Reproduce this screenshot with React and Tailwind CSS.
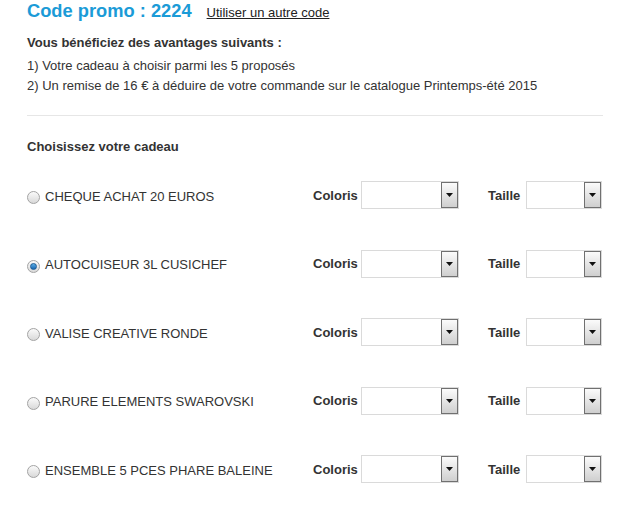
import { useState } from 'react';

const GIFTS = [
  'CHEQUE ACHAT 20 EUROS',
  'AUTOCUISEUR 3L CUSICHEF',
  'VALISE CREATIVE RONDE',
  'PARURE ELEMENTS SWAROVSKI',
  'ENSEMBLE 5 PCES PHARE BALEINE',
];

function Radio({ checked, onClick }) {
  return (
    <span
      onClick={onClick}
      className="relative flex h-[13px] w-[13px] shrink-0 cursor-pointer items-center justify-center rounded-full border border-[#a3a3a3] bg-gradient-to-b from-[#fafafa] to-[#d9d9d9]"
    >
      {checked && (
        <span className="h-[7px] w-[7px] rounded-full border border-[#1c5b95] bg-gradient-to-b from-[#5aaee6] to-[#1766b0]" />
      )}
    </span>
  );
}

function FakeSelect({ width }) {
  return (
    <div className={`flex h-[28px] border border-[#dadada] bg-white ${width}`}>
      <div className="flex-1" />
      <div className="flex h-full w-[17px] items-center justify-center border border-[#707070] bg-gradient-to-b from-[#fbfbfb] to-[#cfcfcf]">
        <svg width="7" height="4" viewBox="0 0 7 4">
          <path d="M0 0h7L3.5 4z" fill="#111" />
        </svg>
      </div>
    </div>
  );
}

export default function App() {
  const [gift, setGift] = useState(1);

  return (
    <div className="min-h-screen bg-white font-['Liberation_Sans',Arial,sans-serif] text-[13px] text-[#333]">
      <div className="ml-[27px] w-[576px]">
        {/* header */}
        <div className="flex items-baseline gap-[15px] leading-[21px]">
          <h1 className="text-[18.3px] leading-[21px] font-bold text-[#1b9bd7]">Code promo : 2224</h1>
          <a href="#" className="text-[13px] text-[#222] underline">
            Utiliser un autre code
          </a>
        </div>

        <div className="mt-[10px] leading-[20px]">
          <p className="font-bold">Vous bénéficiez des avantages suivants :</p>
          <p className="mt-[3px]">1) Votre cadeau à choisir parmi les 5 proposés</p>
          <p>2) Un remise de 16 € à déduire de votre commande sur le catalogue Printemps-été 2015</p>
        </div>

        <div className="mt-[19px] h-px bg-[#e6e6e6]" />

        <p className="mt-[21px] font-bold leading-[20px]">Choisissez votre cadeau</p>

        {/* gifts */}
        <div className="mt-[5px]">
          {GIFTS.map((name, i) => (
            <div key={name} className="flex h-[68.5px] items-center">
              <div className="flex w-[286px] items-center gap-[5px]">
                <span className="mt-[3px]">
                  <Radio checked={gift === i} onClick={() => setGift(i)} />
                </span>
                <span className="uppercase">{name}</span>
              </div>
              <div className="mb-[2px] flex w-[175px] items-center gap-[3px]">
                <span className="font-bold">Coloris</span>
                <FakeSelect width="w-[98px]" />
              </div>
              <div className="mb-[2px] flex items-center gap-[6px]">
                <span className="font-bold">Taille</span>
                <FakeSelect width="w-[76px]" />
              </div>
            </div>
          ))}
        </div>
      </div>
    </div>
  );
}
